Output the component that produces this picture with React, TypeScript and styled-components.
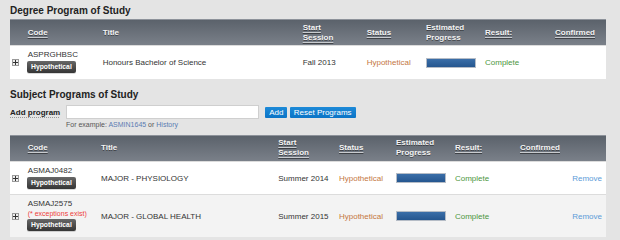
import React from 'react'
import styled, { createGlobalStyle } from 'styled-components'

const GlobalStyle = createGlobalStyle`
    body {
        margin: 0;
        background: #e4e4e4;
        font-family: "Liberation Sans", Arial, sans-serif;
    }
`

type Program = {
    code: string;
    title: string;
    session: string;
    exceptions?: boolean;
    removable?: boolean;
}

const Page = styled.div`
    width: 596px;
    padding: 5px 14px 0 10px;
`

const SectionTitle = styled.h2<{ top?: number }>`
    margin: ${p => p.top || 0}px 0 0;
    font-size: 10px;
    line-height: 12px;
    font-weight: bold;
    color: #222;
`

const Table = styled.div<{ top?: number }>`
    margin-top: ${p => p.top || 0}px;
`

const HeaderRow = styled.div<{ cols: string }>`
    display: grid;
    grid-template-columns: ${p => p.cols};
    height: 26px;
    background: linear-gradient(#5b626b, #7a8089);
    border-top: 1px solid #8d929a;
    box-sizing: border-box;
`

const HeadCell = styled.div<{ underline?: boolean }>`
    display: flex;
    align-items: center;
    font-size: 8px;
    line-height: 10px;
    font-weight: bold;
    color: #f4f4f4;
    text-shadow: 0 1px 0 rgba(0, 0, 0, 0.45);

    span {
        text-decoration: ${p => p.underline ? 'underline' : 'none'};
        text-decoration-color: #c9ccd0;
        text-underline-offset: 2px;
    }
`

const BodyRow = styled.div<{ cols: string; shade?: boolean }>`
    display: grid;
    grid-template-columns: ${p => p.cols};
    background: ${p => p.shade ? '#f3f3f3' : '#fff'};
    border-top: 1px solid #dcdcdc;
    &:first-of-type {
        border-top: none;
    }
`

const Cell = styled.div<{ color?: string; right?: boolean }>`
    display: flex;
    align-items: center;
    justify-content: ${p => p.right ? 'flex-end' : 'flex-start'};
    padding-right: ${p => p.right ? 4 : 0}px;
    font-size: 8px;
    color: ${p => p.color || '#333'};
`

const CodeCell = styled.div`
    display: flex;
    flex-direction: column;
    align-items: flex-start;
    padding: 3.7px 0 5.4px;
    font-size: 8px;
    line-height: 10px;
    color: #333;
`

const Exceptions = styled.div`
    font-size: 7px;
    line-height: 9px;
    color: #ee3b3b;
`

const Badge = styled.div`
    margin: 1.4px 0 0 -1px;
    height: 12px;
    padding: 0 4.3px;
    border-radius: 2px;
    background: linear-gradient(#676767, #353535);
    color: #fff;
    font-size: 6.8px;
    line-height: 12px;
    font-weight: bold;
    box-shadow: 0 1px 0 rgba(0, 0, 0, 0.15);
`

const Expand = styled.div`
    align-self: center;
    margin-left: 2.3px;
    width: 5px;
    height: 5px;
    border: 1px solid #9a9a9a;
    background: #eee;
    position: relative;

    &::before, &::after {
        content: "";
        position: absolute;
        background: #333;
    }
    &::before {
        left: 0;
        top: 2px;
        width: 5px;
        height: 1px;
    }
    &::after {
        left: 2px;
        top: 0;
        width: 1px;
        height: 5px;
    }
`

const Progress = styled.div`
    width: 48px;
    height: 8px;
    border: 1px solid #b5bcc6;
    background: linear-gradient(#3a6ea8, #25568f);
`

const AddRow = styled.div`
    display: flex;
    align-items: center;
    margin-top: 4.3px;
    height: 14.3px;
`

const Label = styled.label`
    font-size: 8px;
    font-weight: bold;
    color: #222;
    text-decoration: underline dotted #999;
    text-underline-offset: 2px;
    margin-right: 6px;
`

const Input = styled.input`
    width: 192.5px;
    height: 14.3px;
    box-sizing: border-box;
    border: 1px solid #cfcfcf;
    background: #fff;
    margin: 0 6.5px 0 0;
    padding: 0;
`

const Button = styled.button`
    height: 11.3px;
    margin-right: 2.3px;
    padding: 0 4px;
    border: none;
    border-radius: 1px;
    background: linear-gradient(#1d8ad8, #0b74c6);
    color: #fff;
    font-family: inherit;
    font-size: 8px;
    line-height: 11px;
`

const Hint = styled.div`
    margin: 1px 0 0 56px;
    font-size: 7px;
    line-height: 9px;
    color: #555;

    a {
        color: #5b7db3;
        text-decoration: none;
    }
`

const degreeCols = '17.7px 75px 200px 64px 59.3px 59px 70px 1fr'
const subjectCols = '17.7px 73.3px 177.3px 60.7px 57px 59px 65px 1fr'

const headers: { label: React.ReactNode; underline: boolean }[] = [
    { label: '', underline: false },
    { label: 'Code', underline: true },
    { label: 'Title', underline: false },
    { label: <>Start<br />Session</>, underline: true },
    { label: 'Status', underline: true },
    { label: <>Estimated<br />Progress</>, underline: false },
    { label: 'Result:', underline: true },
    { label: 'Confirmed', underline: true },
]

const degree: Program[] = [
    { code: 'ASPRGHBSC', title: 'Honours Bachelor of Science', session: 'Fall 2013' },
]

const subjects: Program[] = [
    { code: 'ASMAJ0482', title: 'MAJOR - PHYSIOLOGY', session: 'Summer 2014', removable: true },
    { code: 'ASMAJ2575', title: 'MAJOR - GLOBAL HEALTH', session: 'Summer 2015', exceptions: true, removable: true },
]

const ProgramTable: React.FC<{ cols: string; rows: Program[]; top?: number }> = ({ cols, rows, top }) =>
    <Table top={top}>
        <HeaderRow cols={cols}>
            {headers.map((h, i) =>
                <HeadCell key={i} underline={h.underline}><span>{h.label}</span></HeadCell>
            )}
        </HeaderRow>
        {rows.map((r, i) =>
            <BodyRow key={r.code} cols={cols} shade={i % 2 === 1}>
                <Expand />
                <CodeCell>
                    {r.code}
                    {r.exceptions && <Exceptions>(* exceptions exist)</Exceptions>}
                    <Badge>Hypothetical</Badge>
                </CodeCell>
                <Cell>{r.title}</Cell>
                <Cell>{r.session}</Cell>
                <Cell color="#c4773f">Hypothetical</Cell>
                <Cell><Progress /></Cell>
                <Cell color="#4b9640">Complete</Cell>
                <Cell right color="#5c9bd8">{r.removable ? 'Remove' : ''}</Cell>
            </BodyRow>
        )}
    </Table>

export default function App() {
    return (
        <Page>
            <GlobalStyle />
            <SectionTitle>Degree Program of Study</SectionTitle>
            <ProgramTable cols={degreeCols} rows={degree} top={2.3} />
            <SectionTitle top={10}>Subject Programs of Study</SectionTitle>
            <AddRow>
                <Label>Add program</Label>
                <Input />
                <Button>Add</Button>
                <Button>Reset Programs</Button>
            </AddRow>
            <Hint>For example: <a>ASMIN1645</a> or <a>History</a></Hint>
            <ProgramTable cols={subjectCols} rows={subjects} top={5.5} />
        </Page>
    )
}
